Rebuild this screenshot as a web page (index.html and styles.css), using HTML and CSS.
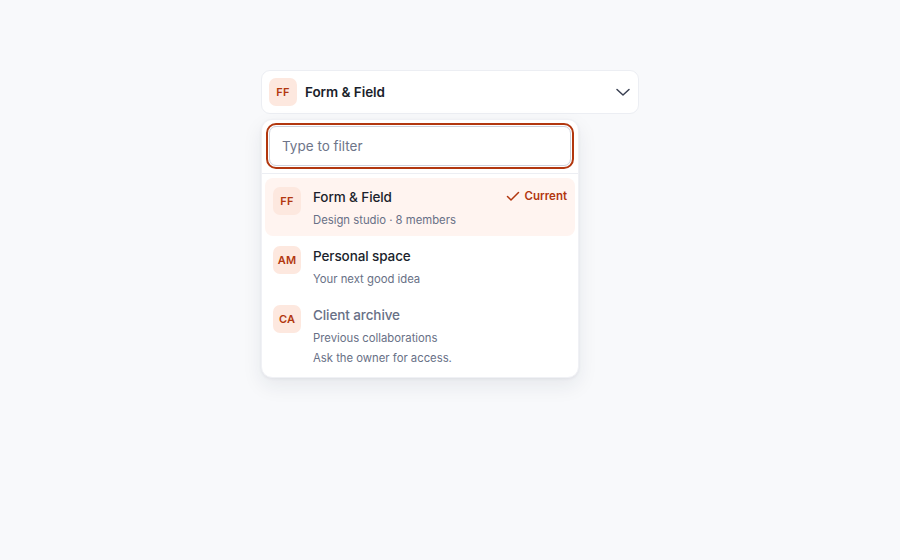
FILE: index.html
```html
<!DOCTYPE html>
<html lang="en">
<head>
<meta charset="utf-8">
<title>Workspace switcher</title>
<link rel="stylesheet" href="styles.css">
</head>
<body>
<div class="page">
  <div class="switcher">
    <button class="trigger" type="button">
      <span class="avatar">FF</span>
      <span class="trigger-name">Form &amp; Field</span>
      <svg class="chevron" width="16" height="16" viewBox="0 0 16 16" fill="none" stroke="currentColor" stroke-width="1.5" stroke-linecap="round" stroke-linejoin="round"><path d="M2 5.5 8 11l6-5.5"/></svg>
    </button>
    <div class="panel">
      <div class="search">
        <input class="filter" type="text" placeholder="Type to filter">
      </div>
      <ul class="list">
        <li class="item current">
          <span class="avatar">FF</span>
          <div class="info">
            <div class="name">Form &amp; Field</div>
            <div class="sub">Design studio · 8 members</div>
          </div>
          <span class="badge">
            <svg width="14" height="14" viewBox="0 0 14 14" fill="none" stroke="currentColor" stroke-width="1.5" stroke-linecap="round" stroke-linejoin="round"><path d="M1.5 7.5 5 11l7.5-7.5"/></svg>
            Current
          </span>
        </li>
        <li class="item">
          <span class="avatar">AM</span>
          <div class="info">
            <div class="name">Personal space</div>
            <div class="sub">Your next good idea</div>
          </div>
        </li>
        <li class="item disabled">
          <span class="avatar">CA</span>
          <div class="info">
            <div class="name">Client archive</div>
            <div class="sub">Previous collaborations</div>
            <div class="sub note">Ask the owner for access.</div>
          </div>
        </li>
      </ul>
    </div>
  </div>
</div>
</body>
</html>
```

FILE: styles.css
```css
* { box-sizing: border-box; }
html, body { margin: 0; padding: 0; }
body {
  background: #f8f9fb;
  font-family: Inter, "Noto Sans", sans-serif;
  color: #1d2230;
  width: 900px;
  height: 560px;
  overflow: hidden;
}
.page {
  display: flex;
  justify-content: center;
  padding-top: 70px;
}
.switcher {
  width: 378px;
  display: flex;
  flex-direction: column;
  gap: 5px;
}
.trigger {
  display: flex;
  align-items: center;
  gap: 8px;
  height: 44px;
  padding: 0 7px 0 7px;
  background: #ffffff;
  border: 1px solid #eceef3;
  border-radius: 9px;
  font: inherit;
  color: inherit;
  text-align: left;
  cursor: pointer;
}
.trigger-name {
  flex: 1;
  font-size: 13.5px;
  font-weight: 600;
  letter-spacing: -0.05px;
  color: #1b1f2c;
}
.chevron { color: #3a4052; }
.avatar {
  flex: none;
  width: 28px;
  height: 28px;
  border-radius: 7px;
  background: #fde8df;
  color: #b2370f;
  font-size: 11px;
  font-weight: 600;
  display: flex;
  align-items: center;
  justify-content: center;
  letter-spacing: 0.2px;
}
.panel {
  width: 318px;
  background: #ffffff;
  border: 1px solid #f0f1f5;
  border-radius: 11px;
  box-shadow: 0 8px 20px rgba(30, 40, 70, 0.08), 0 1px 3px rgba(30, 40, 70, 0.06);
}
.search {
  padding: 6px 7px 7px;
  border-bottom: 1px solid #eceef3;
}
.filter {
  display: block;
  width: 100%;
  height: 40px;
  padding: 0 12px;
  border: 1px solid #cdd2dd;
  border-radius: 7px;
  outline: 2px solid #b2370f;
  outline-offset: 1px;
  font: inherit;
  font-size: 13.5px;
  color: #1d2230;
  background: #fff;
}
.filter::placeholder { color: #6e7589; }
.list {
  list-style: none;
  margin: 0;
  padding: 4px 3px 3px;
  display: flex;
  flex-direction: column;
  gap: 1px;
}
.item {
  display: flex;
  align-items: flex-start;
  gap: 12px;
  padding: 9px 8px 7px 8px;
  border-radius: 8px;
}
.item.current { background: #fff4f0; }
.info { flex: 1; min-width: 0; }
.name {
  font-size: 13.5px;
  line-height: 20px;
  font-weight: 500;
  letter-spacing: -0.1px;
  color: #1b1f2c;
}
.sub {
  margin-top: 4px;
  font-size: 11.3px;
  line-height: 18px;
  color: #687086;
}
.sub.note { margin-top: 2px; }
.disabled .name { color: #687086; font-weight: 500; }
.badge {
  display: flex;
  align-items: center;
  gap: 5px;
  font-size: 11.5px;
  font-weight: 600;
  color: #b2370f;
  line-height: 16px;
  margin-top: 1px;
}
```
